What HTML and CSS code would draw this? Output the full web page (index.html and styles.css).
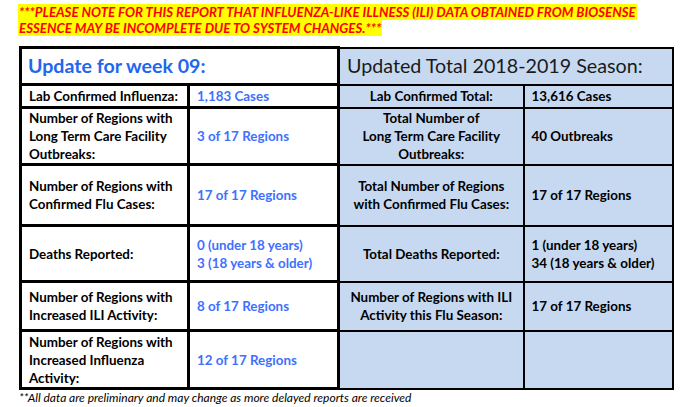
FILE: index.html
```html
<!DOCTYPE html>
<html>
<head>
<meta charset="utf-8">
<link rel="stylesheet" href="styles.css">
</head>
<body>
<p class="notice"><span class="hl">***PLEASE NOTE FOR THIS REPORT THAT INFLUENZA-LIKE ILLNESS (ILI) DATA OBTAINED FROM BIOSENSE</span><br><span class="hl">ESSENCE MAY BE INCOMPLETE DUE TO SYSTEM CHANGES.***</span></p>
<table class="report">
  <colgroup>
    <col class="c1"><col class="c2"><col class="c3"><col class="c4">
  </colgroup>
  <tr class="r-head">
    <th class="lt week" colspan="2">Update for week 09:</th>
    <th class="rt season" colspan="2">Updated Total 2018-2019 Season:</th>
  </tr>
  <tr class="r-lab">
    <td class="lt label">Lab Confirmed Influenza:</td>
    <td class="lt val">1,183 Cases</td>
    <td class="rt rlabel">Lab Confirmed Total:</td>
    <td class="rt rval">13,616 Cases</td>
  </tr>
  <tr class="r-ltcf">
    <td class="lt label">Number of Regions with Long Term Care Facility Outbreaks:</td>
    <td class="lt val">3 of 17 Regions</td>
    <td class="rt rlabel">Total Number of<br>Long Term Care Facility<br>Outbreaks:</td>
    <td class="rt rval">40 Outbreaks</td>
  </tr>
  <tr class="r-conf">
    <td class="lt label">Number of Regions with Confirmed Flu Cases:</td>
    <td class="lt val">17 of 17 Regions</td>
    <td class="rt rlabel">Total Number of Regions with Confirmed Flu Cases:</td>
    <td class="rt rval">17 of 17 Regions</td>
  </tr>
  <tr class="r-death">
    <td class="lt label">Deaths Reported:</td>
    <td class="lt val">0 (under 18 years)<br>3 (18 years &amp; older)</td>
    <td class="rt rlabel">Total Deaths Reported:</td>
    <td class="rt rval">1 (under 18 years)<br>34 (18 years &amp; older)</td>
  </tr>
  <tr class="r-ili">
    <td class="lt label">Number of Regions with Increased ILI Activity:</td>
    <td class="lt val">8 of 17 Regions</td>
    <td class="rt rlabel">Number of Regions with ILI Activity this Flu Season:</td>
    <td class="rt rval">17 of 17 Regions</td>
  </tr>
  <tr class="r-flu">
    <td class="lt label">Number of Regions with Increased Influenza Activity:</td>
    <td class="lt val">12 of 17 Regions</td>
    <td class="rt rlabel"></td>
    <td class="rt rval"></td>
  </tr>
</table>
<p class="foot">**All data are preliminary and may change as more delayed reports are received</p>
</body>
</html>
```
FILE: styles.css
```css
html, body {
  margin: 0;
  padding: 0;
  background: #ffffff;
}
body {
  font-family: Lato, "Liberation Sans", sans-serif;
  color: #000;
}
.notice {
  margin: 4px 0 0 18px;
  font-size: 13.3px;
  line-height: 16px;
  font-weight: bold;
  font-style: italic;
  color: #ff0000;
}
.hl {
  background: #ffff00;
  padding: 0 1px;
}
.report {
  margin: 10px 0 0 19px;
  border-collapse: collapse;
  table-layout: fixed;
  width: 652px;
}
.c1 { width: 168px; }
.c2 { width: 150px; }
.c3 { width: 185px; }
.c4 { width: 149px; }
.report th, .report td {
  padding: 0 7px;
  vertical-align: middle;
  font-size: 13.4px;
  line-height: 18px;
  font-weight: bold;
}
.lt {
  border: 3px solid #000;
  background: #ffffff;
}
.rt {
  border: 2px solid #000;
  background: #c6d9f1;
}
.report .week {
  text-align: left;
  font-size: 19.6px;
  line-height: 26px;
  font-weight: bold;
  color: #2266ee;
  padding-left: 6px;
}
.report .season {
  text-align: left;
  font-size: 19.7px;
  line-height: 26px;
  font-weight: normal;
  color: #1a1a1a;
}
.val {
  color: #4070ff;
  text-align: left;
}
.rlabel {
  text-align: center;
}
.rval {
  text-align: left;
}
.r-head { height: 37px; }
.r-lab { height: 23px; }
.r-ltcf { height: 57px; }
.r-conf { height: 61px; }
.r-death { height: 56px; }
.r-ili { height: 49px; }
.r-flu { height: 58px; }
.foot {
  margin: 2px 0 0 19px;
  font-size: 12px;
  line-height: 12px;
  font-style: italic;
}
```
